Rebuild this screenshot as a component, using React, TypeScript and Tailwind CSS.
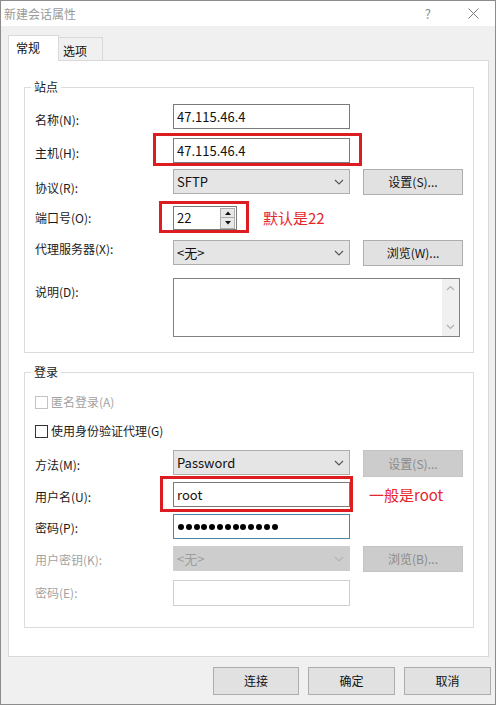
import React from "react";

const font = { fontFamily: '"Noto Sans CJK SC", "Noto Sans", sans-serif' };

function Chevron({ dim }: { dim?: boolean }) {
    return (
        <svg width="10" height="6" viewBox="0 0 10 6" className="shrink-0">
            <path d="M1 1 L5 5 L9 1" fill="none" stroke={dim ? "#b4b4b4" : "#555"} strokeWidth="1.1" />
        </svg>
    );
}

function Select({ value, dim }: { value: string; dim?: boolean }) {
    return (
        <div
            className={
                dim
                    ? "w-[177px] h-[25px] border border-[#cfcfcf] bg-[#cdcdcd] text-[#9d9d9d] flex items-center justify-between pl-[3px] pr-[5px] text-[13px]"
                    : "w-[177px] h-[25px] border border-[#adadad] bg-[#e5e5e5] text-[#111] flex items-center justify-between pl-[3px] pr-[5px] text-[13px]"
            }
        >
            <span>{value}</span>
            <Chevron dim={dim} />
        </div>
    );
}

function Btn({ label, dim, h = "h-[27px]" }: { label: string; dim?: boolean; h?: string }) {
    return (
        <div
            className={
                (dim
                    ? "border-[#c4c4c4] bg-[#cccccc] text-[#8a8a8a] "
                    : "border-[#adadad] bg-[#e1e1e1] text-[#111] ") +
                "ml-[13px] w-[100px] border flex items-center justify-center text-[12px] " +
                h
            }
        >
            {label}
        </div>
    );
}

function Input({ value, w = "w-[177px]", h = "h-[25px]", light }: { value?: string; w?: string; h?: string; light?: boolean }) {
    return (
        <div
            className={
                (light ? "border-[#cfcfcf] " : "border-[#7a7a7a] ") +
                "bg-white border flex items-center pl-[3px] text-[13px] text-[#111] " +
                w +
                " " +
                h
            }
        >
            {value}
        </div>
    );
}

function Label({ text, pt, dim }: { text: string; pt: string; dim?: boolean }) {
    return (
        <div className={"w-[138px] shrink-0 text-[12px] leading-[16px] " + pt + (dim ? " text-[#a3a3a3]" : " text-[#1a1a1a]")}>
            {text}
        </div>
    );
}

function RedBox({ cls }: { cls: string }) {
    return <div className={"absolute border-[3px] border-[#dd1c22] pointer-events-none " + cls} />;
}

function Check({ label, dim }: { label: string; dim?: boolean }) {
    return (
        <div className="flex items-center h-[16px]">
            <div
                className={
                    "w-[13px] h-[13px] bg-white border " + (dim ? "border-[#c3c3c3]" : "border-[#333]")
                }
            />
            <span className={"ml-[3px] text-[12px] " + (dim ? "text-[#a3a3a3]" : "text-[#1a1a1a]")}>{label}</span>
        </div>
    );
}

export default function App() {
    return (
        <div className="w-[498px] h-[706px] bg-white" style={font}>
            <div className="w-[496px] h-[705px] border border-[#8c8c8c] bg-[#f0f0f0] flex flex-col">
                {/* title bar */}
                <div className="h-[25px] bg-white flex items-center shrink-0">
                    <span className="ml-[3px] text-[12px] text-[#9a9a9a]">新建会话属性</span>
                    <span className="ml-auto text-[13px] text-[#8a8a8a]">?</span>
                    <svg width="11" height="11" viewBox="0 0 11 11" className="ml-[37px] mr-[16px]">
                        <path d="M0.5 0.5 L10.5 10.5 M10.5 0.5 L0.5 10.5" stroke="#7a7a7a" strokeWidth="1" />
                    </svg>
                </div>

                {/* tabs */}
                <div className="mt-[9px] ml-[7px] flex items-end h-[25px] shrink-0">
                    <div className="relative z-10 -mb-px w-[51px] h-[26px] bg-white border border-b-0 border-[#d9d9d9] text-[12px] pl-[7px] pt-[3px] text-[#111]">
                        常规
                    </div>
                    <div className="w-[44px] h-[23px] border border-l-0 border-b-0 border-[#d9d9d9] bg-[#f0f0f0] text-[12px] pl-[4px] pt-[4px] text-[#111]">
                        选项
                    </div>
                </div>

                {/* panel */}
                <div className="ml-[7px] w-[481px] h-[597px] border border-[#d9d9d9] bg-white pl-[15px] shrink-0">
                    {/* 站点 */}
                    <div className="relative mt-[26px] w-[450px] h-[266px] border border-[#dcdcdc] pl-[10px]">
                        <span className="absolute left-[6px] -top-[9px] bg-white px-[3px] text-[12px] leading-[16px] text-[#1a1a1a]">
                            站点
                        </span>
                        <div className="flex mt-[16px] h-[25px]">
                            <Label text="名称(N):" pt="pt-[8px]" />
                            <Input value="47.115.46.4" />
                        </div>
                        <div className="flex mt-[9px] h-[25px]">
                            <Label text="主机(H):" pt="pt-[7px]" />
                            <div className="relative">
                                <Input value="47.115.46.4" />
                                <RedBox cls="-left-[20px] -top-[5px] -right-[12px] -bottom-[3px]" />
                            </div>
                        </div>
                        <div className="flex mt-[6px] h-[26px]">
                            <Label text="协议(R):" pt="pt-[11px]" />
                            <Select value="SFTP" />
                            <Btn label="设置(S)..." h="h-[26px]" />
                        </div>
                        <div className="flex mt-[11px] h-[24px]">
                            <Label text="端口号(O):" pt="pt-[4px]" />
                            <div className="relative">
                                <div className="w-[64px] h-[24px] border border-[#7a7a7a] bg-white flex items-center pl-[3px] text-[13px] text-[#111]">
                                    <span className="flex-1">22</span>
                                    <div className="w-[15px] h-[21px] mr-px flex flex-col">
                                        <div className="h-[10px] border border-[#adadad] bg-[#e8e8e8] flex items-center justify-center">
                                            <svg width="6" height="4" viewBox="0 0 6 4">
                                                <path d="M0 4 L3 0.5 L6 4 Z" fill="#111" />
                                            </svg>
                                        </div>
                                        <div className="h-[11px] border border-t-0 border-[#adadad] bg-[#e8e8e8] flex items-center justify-center">
                                            <svg width="6" height="4" viewBox="0 0 6 4">
                                                <path d="M0 0 L3 3.5 L6 0 Z" fill="#111" />
                                            </svg>
                                        </div>
                                    </div>
                                </div>
                                <RedBox cls="-left-[14px] -top-[5px] -right-[12px] -bottom-[3px]" />
                            </div>
                            <span className="ml-[26px] text-[15px] leading-[24px] text-[#e5262b]">默认是22</span>
                        </div>
                        <div className="flex mt-[10px] h-[25px]">
                            <Label text="代理服务器(X):" pt="pt-[1px]" />
                            <Select value="<无>" />
                            <Btn label="浏览(W)..." h="h-[26px]" />
                        </div>
                        <div className="flex mt-[13px] h-[59px]">
                            <Label text="说明(D):" pt="pt-[6px]" />
                            <div className="w-[287px] h-[59px] border border-[#828282] bg-white flex justify-end">
                                <div className="w-[17px] h-full bg-[#f0f0f0] flex flex-col items-center justify-between py-[6px]">
                                    <svg width="9" height="6" viewBox="0 0 9 6">
                                        <path d="M1 5 L4.5 1.5 L8 5" fill="none" stroke="#b0b0b0" strokeWidth="1.2" />
                                    </svg>
                                    <svg width="9" height="6" viewBox="0 0 9 6">
                                        <path d="M1 1 L4.5 4.5 L8 1" fill="none" stroke="#b0b0b0" strokeWidth="1.2" />
                                    </svg>
                                </div>
                            </div>
                        </div>
                    </div>

                    {/* 登录 */}
                    <div className="relative mt-[19px] w-[450px] h-[256px] border border-[#dcdcdc] pl-[10px]">
                        <span className="absolute left-[6px] -top-[9px] bg-white px-[3px] text-[12px] leading-[16px] text-[#1a1a1a]">
                            登录
                        </span>
                        <div className="mt-[21px]">
                            <Check label="匿名登录(A)" dim />
                        </div>
                        <div className="mt-[13px]">
                            <Check label="使用身份验证代理(G)" />
                        </div>
                        <div className="flex mt-[11px] h-[25px]">
                            <Label text="方法(M):" pt="pt-[7px]" />
                            <Select value="Password" />
                            <Btn label="设置(S)..." dim />
                        </div>
                        <div className="flex mt-[7px] h-[25px]">
                            <Label text="用户名(U):" pt="pt-[7px]" />
                            <div className="relative">
                                <Input value="root" />
                                <RedBox cls="-left-[13px] -top-[6px] -right-[3px] -bottom-[5px]" />
                            </div>
                            <span className="ml-[19px] text-[15px] leading-[25px] text-[#e5262b]">一般是root</span>
                        </div>
                        <div className="flex mt-[7px] h-[25px]">
                            <Label text="密码(P):" pt="pt-[6px]" />
                            <div className="w-[177px] h-[25px] border border-[#4f86a6] bg-white flex items-center pl-[4px] gap-[1.8px]">
                                {Array.from({ length: 13 }).map((_, i) => (
                                    <div key={i} className="w-[6px] h-[6px] rounded-full bg-black" />
                                ))}
                            </div>
                        </div>
                        <div className="flex mt-[7px] h-[25px]">
                            <Label text="用户密钥(K):" pt="pt-[6px]" dim />
                            <Select value="<无>" dim />
                            <Btn label="浏览(B)..." dim h="h-[26px]" />
                        </div>
                        <div className="flex mt-[9px] h-[26px]">
                            <Label text="密码(E):" pt="pt-[5px]" dim />
                            <Input light h="h-[26px]" />
                        </div>
                    </div>
                </div>

                {/* buttons */}
                <div className="mt-[10px] flex justify-end pr-[4px] gap-[9px]">
                    <div className="w-[86px] h-[28px] border border-[#adadad] bg-[#e1e1e1] flex items-center justify-center text-[12px] text-[#111]">
                        连接
                    </div>
                    <div className="w-[87px] h-[28px] border border-[#adadad] bg-[#e1e1e1] flex items-center justify-center text-[12px] text-[#111]">
                        确定
                    </div>
                    <div className="w-[87px] h-[28px] border border-[#adadad] bg-[#e1e1e1] flex items-center justify-center text-[12px] text-[#111]">
                        取消
                    </div>
                </div>
            </div>
        </div>
    );
}
